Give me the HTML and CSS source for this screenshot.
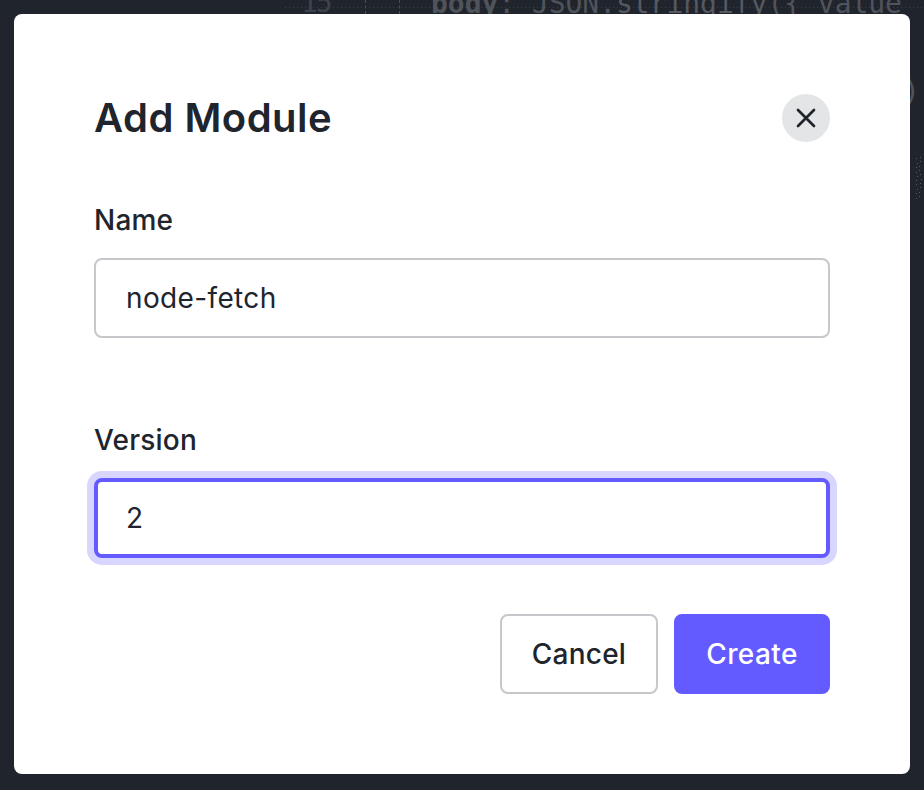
FILE: index.html
```html
<!DOCTYPE html>
<html lang="en">
<head>
<meta charset="utf-8">
<title>Add Module</title>
<link rel="stylesheet" href="styles.css">
</head>
<body>
<div class="editor" aria-hidden="true">
  <span class="dots"></span>
  <span class="line-number">15</span>
  <span class="guide first"></span><span class="guide"></span>
  <span class="code"><b>body</b>: JSON.<span class="method">stringify</span>({ value</span>
  <span class="edge">)</span>
  <svg class="minimap" width="6" height="45" viewBox="0 0 6 45"><path d="M0 1h1M4 0h1M4 4h1M1 6h1M3 9h1M0 10h1M3 13h1M0 15h1M4 17h1M1 19h1M5 22h1M0 23h1M4 26h1M0 27h1M4 30h1M1 32h1M3 35h1M0 36h1M3 39h1M0 41h1" stroke="#565a61"/></svg>
</div>
<main class="dialog" role="dialog" aria-labelledby="title">
  <header class="header">
    <h1 class="title" id="title">Add Module</h1>
    <button class="close" aria-label="Close">
      <svg viewBox="0 0 48 48" width="48" height="48"><path d="M16 16L32 32M32 16L16 32" fill="none" stroke="#20242d" stroke-width="2.7" stroke-linecap="round"/></svg>
    </button>
  </header>
  <label class="label" for="name">Name</label>
  <input class="input" id="name" value="node-fetch">
  <label class="label version" for="version">Version</label>
  <input class="input active" id="version" value="2">
  <footer class="actions">
    <button class="button">Cancel</button>
    <button class="button primary">Create</button>
  </footer>
</main>
</body>
</html>
```
FILE: styles.css
```css
* { box-sizing: border-box; }
body { margin: 0; height: 790px; padding: 14px; overflow: hidden; background: #20242d; font-family: Inter, sans-serif; color: #20242d; position: relative; }
.editor { position: absolute; inset: 0; color: #50535a; font: 28px "DejaVu Sans Mono", monospace; }
.dots { position: absolute; left: 285px; top: 7px; width: 639px; height: 1px; background: repeating-linear-gradient(90deg, #3b3f47 0 1px, transparent 1px 4px); }
.line-number { position: absolute; left: 301px; top: -14px; line-height: 34px; color: #3e424a; letter-spacing: -2px; }
.guide { position: absolute; left: 399px; top: 0; width: 0; height: 14px; border-left: 1px dashed #4b4e56; }
.first { left: 365px; }
.code { position: absolute; left: 431px; top: -13px; line-height: 34px; white-space: pre; letter-spacing: -.04px; }
.method { color: #565960; }
.edge { position: absolute; left: 903px; top: 75px; line-height: 34px; }
.minimap { position: absolute; left: 916px; top: 157px; shape-rendering: crispEdges; }
.dialog { position: relative; height: 760px; padding: 80px; background: #fff; border-radius: 8px; }
.header { display: flex; justify-content: space-between; align-items: center; height: 48px; }
.title { margin: 0; font-size: 40px; line-height: 48px; font-weight: 600; letter-spacing: .48px; }
.close { width: 48px; height: 48px; padding: 0; border: 0; border-radius: 50%; background: #e3e5e7; }
.close svg { display: block; }
.label { display: block; margin-top: 58px; height: 40px; line-height: 40px; font-size: 28px; font-weight: 500; letter-spacing: .22px; }
.version { margin-top: 82px; }
.input { display: block; width: 100%; height: 80px; margin-top: 18px; padding: 0 30px; border: 2px solid #c7c7cc; border-radius: 8px; background: #fff; color: #20242d; font: 28px Inter, sans-serif; letter-spacing: .36px; outline: none; }
.active { border: 4px solid #635bff; padding: 0 28px; box-shadow: 0 0 0 7px #d8d6ff; }
.actions { display: flex; justify-content: flex-end; gap: 16px; margin-top: 56px; }
.button { width: 158px; height: 80px; padding: 0; border: 2px solid #c7c7cc; border-radius: 8px; background: #fff; color: #20242d; font: 500 28px Inter, sans-serif; letter-spacing: .22px; }
.primary { width: 156px; border-color: #635bff; background: #635bff; color: #fff; letter-spacing: .4px; }
```
